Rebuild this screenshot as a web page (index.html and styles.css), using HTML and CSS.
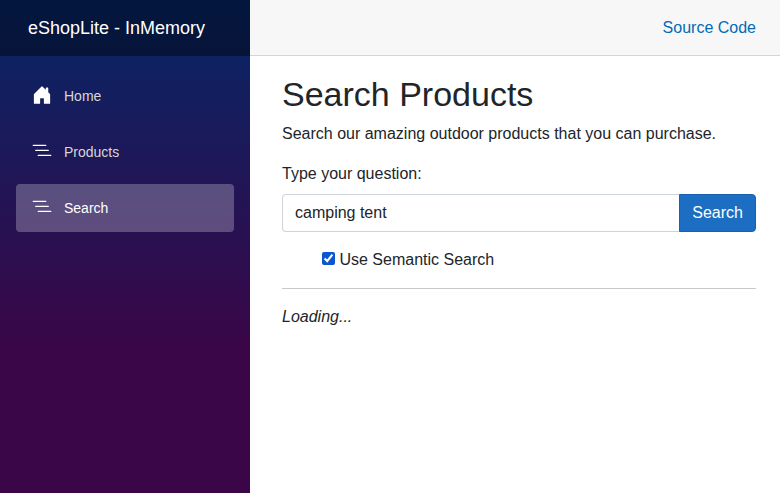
FILE: index.html
```html
<!DOCTYPE html>
<html lang="en">
<head>
<meta charset="utf-8">
<title>Search</title>
<link rel="stylesheet" href="styles.css">
</head>
<body>
<div class="page">
  <div class="sidebar">
    <div class="brand-row"><a class="brand" href="#">eShopLite - InMemory</a></div>
    <nav class="nav">
      <a class="nav-link" href="#">
        <svg class="icon" viewBox="0 0 16 16" fill="currentColor" aria-hidden="true"><path d="M6.5 14.5v-3.505c0-.245.25-.495.5-.495h2c.25 0 .5.25.5.5v3.5a.5.5 0 0 0 .5.5h4a.5.5 0 0 0 .5-.5v-7a.5.5 0 0 0-.146-.354L13 5.793V2.5a.5.5 0 0 0-.5-.5h-1a.5.5 0 0 0-.5.5v1.293L8.354 1.146a.5.5 0 0 0-.708 0l-6 6A.5.5 0 0 0 1.5 7.5v7a.5.5 0 0 0 .5.5h4a.5.5 0 0 0 .5-.5Z"/></svg>
        Home
      </a>
      <a class="nav-link" href="#">
        <svg class="icon" viewBox="0 0 16 16" fill="currentColor" aria-hidden="true"><path fill-rule="evenodd" d="M4.5 11.5A.5.5 0 0 1 5 11h10a.5.5 0 0 1 0 1H5a.5.5 0 0 1-.5-.5zm-2-4A.5.5 0 0 1 3 7h10a.5.5 0 0 1 0 1H3a.5.5 0 0 1-.5-.5zm-2-4A.5.5 0 0 1 1 3h10a.5.5 0 0 1 0 1H1a.5.5 0 0 1-.5-.5z"/></svg>
        Products
      </a>
      <a class="nav-link active" href="#" aria-current="page">
        <svg class="icon" viewBox="0 0 16 16" fill="currentColor" aria-hidden="true"><path fill-rule="evenodd" d="M4.5 11.5A.5.5 0 0 1 5 11h10a.5.5 0 0 1 0 1H5a.5.5 0 0 1-.5-.5zm-2-4A.5.5 0 0 1 3 7h10a.5.5 0 0 1 0 1H3a.5.5 0 0 1-.5-.5zm-2-4A.5.5 0 0 1 1 3h10a.5.5 0 0 1 0 1H1a.5.5 0 0 1-.5-.5z"/></svg>
        Search
      </a>
    </nav>
  </div>
  <main>
    <div class="top-row"><a href="#">Source Code</a></div>
    <article class="content">
      <h1>Search Products</h1>
      <p>Search our amazing outdoor products that you can purchase.</p>
      <form>
        <label class="question-label" for="question">Type your question:</label>
        <div class="input-group">
          <input class="question" id="question" type="text" value="camping tent">
          <button class="search-button" type="button">Search</button>
        </div>
        <div class="check-row">
          <input id="semantic" type="checkbox" checked>
          <label for="semantic">Use Semantic Search</label>
        </div>
      </form>
      <hr>
      <p><em>Loading...</em></p>
    </article>
  </main>
</div>
</body>
</html>
```
FILE: styles.css
```css
* {
  box-sizing: border-box;
}

body {
  margin: 0;
  font: 16px/24px "Liberation Sans", Arial, sans-serif;
  color: #212529;
  background: #fff;
}

.page {
  display: flex;
  min-height: 100vh;
}

.sidebar {
  flex: none;
  width: 250px;
  background: linear-gradient(180deg, rgb(5, 39, 103) 0%, #3a0647 70%);
}

.brand-row {
  display: flex;
  align-items: center;
  height: 56px;
  padding-left: 28px;
  background: rgba(0, 0, 0, 0.4);
}

.brand {
  color: #fff;
  font-size: 18px;
  text-decoration: none;
}

.nav {
  display: flex;
  flex-direction: column;
  gap: 8px;
  padding: 16px;
}

.nav-link {
  display: flex;
  align-items: center;
  height: 48px;
  padding: 0 16px;
  border-radius: 4px;
  color: #d7d7d7;
  font-size: 14px;
  text-decoration: none;
}

.nav-link.active {
  color: #fff;
  background: rgba(255, 255, 255, 0.25);
}

.icon {
  flex: none;
  width: 20px;
  height: 20px;
  margin: 0 12px 2px 0;
  color: #fff;
}

main {
  flex: 1;
  min-width: 0;
}

.top-row {
  display: flex;
  align-items: center;
  justify-content: flex-end;
  height: 56px;
  padding: 0 24px 0 32px;
  border-bottom: 1px solid #d6d5d5;
  background: #f7f7f7;
}

.top-row a {
  color: #006bb7;
  text-decoration: none;
}

.content {
  padding: 18px 24px 0 32px;
}

h1 {
  margin: 0 0 8px;
  font-size: 34px;
  font-weight: 400;
  line-height: 40px;
}

p {
  margin: 0 0 16px;
}

.question-label {
  display: block;
  margin-bottom: 8px;
}

.input-group {
  display: flex;
  height: 38px;
}

.question {
  flex: 1;
  min-width: 0;
  padding: 6px 12px;
  border: 1px solid #ced4da;
  border-right: 0;
  border-radius: 4px 0 0 4px;
  color: inherit;
  font: inherit;
  background: #fff;
}

.search-button {
  padding: 6px 12px;
  border: 1px solid #1861ac;
  border-radius: 0 4px 4px 0;
  color: #fff;
  font: inherit;
  background: #1b6ec2;
}

.check-row {
  margin-top: 16px;
  padding-left: 40px;
}

.check-row input {
  margin: 0;
  accent-color: #0b57d0;
}

hr {
  height: 1px;
  margin: 16px 0;
  border: 0;
  background: #c8c9ca;
}
```
